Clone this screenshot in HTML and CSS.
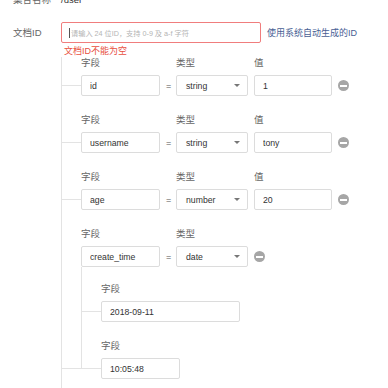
FILE: index.html
```html
<!DOCTYPE html>
<html lang="zh-CN">
<head>
<meta charset="UTF-8">
<meta name="viewport" content="width=device-width, initial-scale=1.0">
<title>新增文档</title>
<link rel="stylesheet" href="styles.css">
</head>
<body>
<div class="form">
    <div class="form-item meta">
        <span class="form-label">集合名称</span>
        <span class="form-text">/user</span>
    </div>

    <div class="form-item doc-id">
        <span class="form-label">文档ID</span>
        <div class="form-control">
            <div class="id-line">
                <div class="input is-error">
                    <span class="caret"></span>
                    <span class="placeholder">请输入 24 位ID，支持 0-9 及 a-f 字符</span>
                </div>
                <a class="link">使用系统自动生成的ID</a>
            </div>
            <div class="error-text">文档ID不能为空</div>
        </div>
    </div>

    <div class="tree">
        <div class="field-row">
            <div class="cols labels">
                <span class="c-field">字段</span>
                <span class="c-type">类型</span>
                <span class="c-value">值</span>
            </div>
            <div class="cols controls branch">
                <input class="input" value="id" readonly>
                <span class="eq">=</span>
                <div class="select">string</div>
                <input class="input" value="1" readonly>
                <span class="remove"></span>
            </div>
        </div>

        <div class="field-row">
            <div class="cols labels">
                <span class="c-field">字段</span>
                <span class="c-type">类型</span>
                <span class="c-value">值</span>
            </div>
            <div class="cols controls branch">
                <input class="input" value="username" readonly>
                <span class="eq">=</span>
                <div class="select">string</div>
                <input class="input" value="tony" readonly>
                <span class="remove"></span>
            </div>
        </div>

        <div class="field-row">
            <div class="cols labels">
                <span class="c-field">字段</span>
                <span class="c-type">类型</span>
                <span class="c-value">值</span>
            </div>
            <div class="cols controls branch">
                <input class="input" value="age" readonly>
                <span class="eq">=</span>
                <div class="select">number</div>
                <input class="input" value="20" readonly>
                <span class="remove"></span>
            </div>
        </div>

        <div class="field-row">
            <div class="cols labels">
                <span class="c-field">字段</span>
                <span class="c-type">类型</span>
            </div>
            <div class="cols controls">
                <input class="input" value="create_time" readonly>
                <span class="eq">=</span>
                <div class="select">date</div>
                <span class="remove"></span>
            </div>

            <!-- date value is split into date + time sub fields -->
            <div class="sub">
                <div class="sub-item">
                    <div class="sub-label">字段</div>
                    <div class="sub-control">
                        <input class="input wide" value="2018-09-11" readonly>
                    </div>
                </div>
                <div class="sub-item">
                    <div class="sub-label">字段</div>
                    <div class="sub-control">
                        <input class="input short" value="10:05:48" readonly>
                    </div>
                </div>
            </div>
        </div>
    </div>
</div>
</body>
</html>
```

FILE: styles.css
```css
:root {
    --label-color: #666;
    --text-color: #333;
    --border-color: #dcdcdc;
    --line-color: #e3e3e3;
    --error-color: #e8503f;
    --link-color: #485e94;
}

* {
    box-sizing: border-box;
}

body {
    margin: 0;
    background: #fff;
    font-family: "Liberation Sans", "Noto Sans CJK SC", sans-serif;
    font-size: 9.5px;
    color: var(--text-color);
    overflow: hidden;
}

.form {
    width: 388px;
    height: 388px;
    overflow: hidden;
}

.form-item {
    display: flex;
}

.form-label {
    width: 61px;
    padding-left: 13px;
    color: var(--label-color);
    flex-shrink: 0;
}

.meta {
    margin-top: -6px;
    line-height: 12px;
}

.meta .form-text {
    color: #333;
}

.doc-id {
    margin-top: 16px;
}

.doc-id .form-label {
    line-height: 21px;
}

.id-line {
    display: flex;
    align-items: center;
    gap: 6px;
}

.input {
    display: block;
    width: 100%;
    height: 21px;
    margin: 0;
    padding: 0 8px;
    border: 1px solid var(--border-color);
    border-radius: 2px;
    background: #fff;
    font-family: "Liberation Sans", "Noto Sans CJK SC", sans-serif;
    font-size: 8.7px;
    color: var(--text-color);
    outline: none;
}

.input.is-error {
    display: flex;
    align-items: center;
    gap: 1px;
    width: 200px;
    padding-left: 7px;
    border-color: #f07d7d;
    white-space: nowrap;
    overflow: hidden;
}

.caret {
    width: 1px;
    height: 10px;
    background: #555;
}

.placeholder {
    color: #b4b4b4;
    font-size: 7.2px;
}

.link {
    color: var(--link-color);
    font-size: 9px;
    white-space: nowrap;
}

.error-text {
    margin-top: 3px;
    padding-left: 3px;
    line-height: 11px;
    font-size: 9px;
    color: var(--error-color);
}

/* tree of fields */
.tree {
    margin-left: 61px;
    padding: 0 0 40px 19px;
    border-left: 1px solid var(--line-color);
}

.field-row {
    margin-bottom: 18px;
}

.cols {
    display: grid;
    grid-template-columns: 79px 4px 72px 78px 11px;
    column-gap: 6px;
    align-items: center;
}

.labels {
    height: 12px;
    line-height: 12px;
    margin-bottom: 6px;
    color: var(--label-color);
}

.c-field { grid-column: 1; }
.c-type { grid-column: 3; }
.c-value { grid-column: 4; }

.controls {
    position: relative;
    height: 21px;
}

.branch::before {
    content: "";
    position: absolute;
    left: -20px;
    top: 10px;
    width: 20px;
    height: 1px;
    background: var(--line-color);
}

.eq {
    text-align: center;
    color: #555;
    font-size: 9px;
}

.select {
    display: flex;
    align-items: center;
    justify-content: space-between;
    height: 21px;
    padding: 0 7px 0 9px;
    border: 1px solid var(--border-color);
    border-radius: 2px;
    font-size: 8.7px;
}

.select::after {
    content: "";
    border-left: 3px solid transparent;
    border-right: 3px solid transparent;
    border-top: 3.5px solid #777;
}

.remove {
    display: flex;
    align-items: center;
    justify-content: center;
    width: 11px;
    height: 11px;
    border-radius: 50%;
    background: #a6a6a6;
}

.remove::after {
    content: "";
    width: 7px;
    height: 2px;
    background: #fff;
}

/* nested date fields */
.sub {
    position: relative;
    padding: 16px 0 0 20px;
}

.sub::before {
    content: "";
    position: absolute;
    left: 0;
    top: 0;
    bottom: 10px;
    width: 1px;
    background: var(--line-color);
}

.sub::after {
    content: "";
    position: absolute;
    left: -20px;
    bottom: 10px;
    width: 20px;
    height: 1px;
    background: var(--line-color);
}

.sub-item + .sub-item {
    margin-top: 18px;
}

.sub-label {
    height: 12px;
    line-height: 12px;
    margin-bottom: 6px;
    color: var(--label-color);
}

.sub-control {
    position: relative;
}

.sub-control::before {
    content: "";
    position: absolute;
    left: -20px;
    top: 10px;
    width: 20px;
    height: 1px;
    background: var(--line-color);
}

.input.wide {
    width: 139px;
}

.input.short {
    width: 79px;
}
```
